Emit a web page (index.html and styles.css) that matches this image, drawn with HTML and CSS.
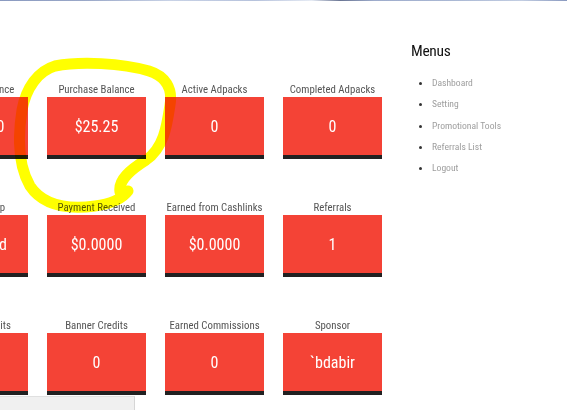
FILE: index.html
```html
<!DOCTYPE html>
<html>
<head>
<meta charset="utf-8">
<link rel="stylesheet" href="styles.css">
</head>
<body>
<div class="topline"></div>
<div class="page">
  <main class="stats">
    <div class="stat"><div class="label">Account Balance</div><div class="card">$0.0000</div></div>
    <div class="stat"><div class="label">Purchase Balance</div><div class="card">$25.25</div></div>
    <div class="stat"><div class="label">Active Adpacks</div><div class="card">0</div></div>
    <div class="stat"><div class="label">Completed Adpacks</div><div class="card">0</div></div>

    <div class="stat"><div class="label">Membership</div><div class="card">Standard</div></div>
    <div class="stat"><div class="label">Payment Received</div><div class="card">$0.0000</div></div>
    <div class="stat"><div class="label">Earned from Cashlinks</div><div class="card">$0.0000</div></div>
    <div class="stat"><div class="label">Referrals</div><div class="card">1</div></div>

    <div class="stat"><div class="label">Text Ad Credits</div><div class="card">0</div></div>
    <div class="stat"><div class="label">Banner Credits</div><div class="card">0</div></div>
    <div class="stat"><div class="label">Earned Commissions</div><div class="card">0</div></div>
    <div class="stat"><div class="label">Sponsor</div><div class="card">`bdabir</div></div>
  </main>
  <aside class="sidebar">
    <h3 class="menu-title">Menus</h3>
    <ul class="menu">
      <li><a href="#">Dashboard</a></li>
      <li><a href="#">Setting</a></li>
      <li><a href="#">Promotional Tools</a></li>
      <li><a href="#">Referrals List</a></li>
      <li><a href="#">Logout</a></li>
    </ul>
  </aside>
</div>
<div class="statusbar"></div>
<svg class="scribble" width="567" height="410" viewBox="0 0 567 410">
  <path d="M 120 192 C 118 180, 130 170, 146 160 C 164 148, 167 125, 170 105 C 173 88, 165 76, 149 71 C 122 63, 80 61, 55 66 C 38 71, 26 88, 22 110 C 18 135, 18 165, 30 186 C 42 204, 65 210, 95 206 C 110 204, 122 199, 128 191" fill="none" stroke="#ffff00" stroke-width="11" stroke-linecap="round" stroke-linejoin="round"/>
</svg>
</body>
</html>
```

FILE: styles.css
```css
html, body {
  margin: 0;
  padding: 0;
  background: #ffffff;
  overflow: hidden;
  font-family: Roboto, "Liberation Sans", sans-serif;
}
body {
  width: 567px;
  height: 410px;
  position: relative;
}
.topline {
  height: 1px;
  background: linear-gradient(90deg, #8a9ac0 0%, #9aa8c8 15%, #c8d2e6 30%, #b6c2dc 45%, #e6ebf4 55%, #6b7694 60%, #9eaccc 66%, #aab8d4 80%, #c2cde2 92%, #8a9ac0 100%);
}
.page {
  display: flex;
  align-items: flex-start;
}
.stats {
  margin-left: -71px;
  padding-top: 82px;
  display: grid;
  grid-template-columns: repeat(4, 99px);
  column-gap: 19px;
  row-gap: 42px;
  font-stretch: 87%;
}
.stat {
  display: flex;
  flex-direction: column;
  align-items: center;
}
.label {
  font-size: 10.8px;
  line-height: 14px;
  color: #555555;
  white-space: nowrap;
}
.card {
  width: 99px;
  height: 58px;
  background: #f44336;
  border-bottom: 4px solid #212121;
  color: #ffffff;
  font-size: 16px;
  display: flex;
  align-items: center;
  justify-content: center;
  white-space: nowrap;
  overflow: visible;
}
.sidebar {
  margin-left: 29px;
  padding-top: 40px;
  font-stretch: 87%;
}
.menu-title {
  margin: 0;
  font-size: 15.5px;
  line-height: 20px;
  font-weight: 400;
  color: #111111;
  letter-spacing: -0.3px;
}
.menu {
  margin: 11px 0 0 0;
  padding: 0 0 0 21px;
  list-style: disc;
  color: #333333;
  font-size: 9.6px;
}
.menu li {
  line-height: 21.3px;
}
.menu li::marker {
  font-size: 11px;
}
.menu a {
  color: #9e9e9e;
  text-decoration: none;
}
.statusbar {
  position: absolute;
  left: 0;
  top: 396px;
  width: 134px;
  height: 20px;
  background: #f0f0f0;
  border-top: 1px solid #e0e0e0;
  border-right: 1px solid #d6d6d6;
}
.scribble {
  position: absolute;
  left: 0;
  top: 0;
  pointer-events: none;
  mix-blend-mode: multiply;
}
```
